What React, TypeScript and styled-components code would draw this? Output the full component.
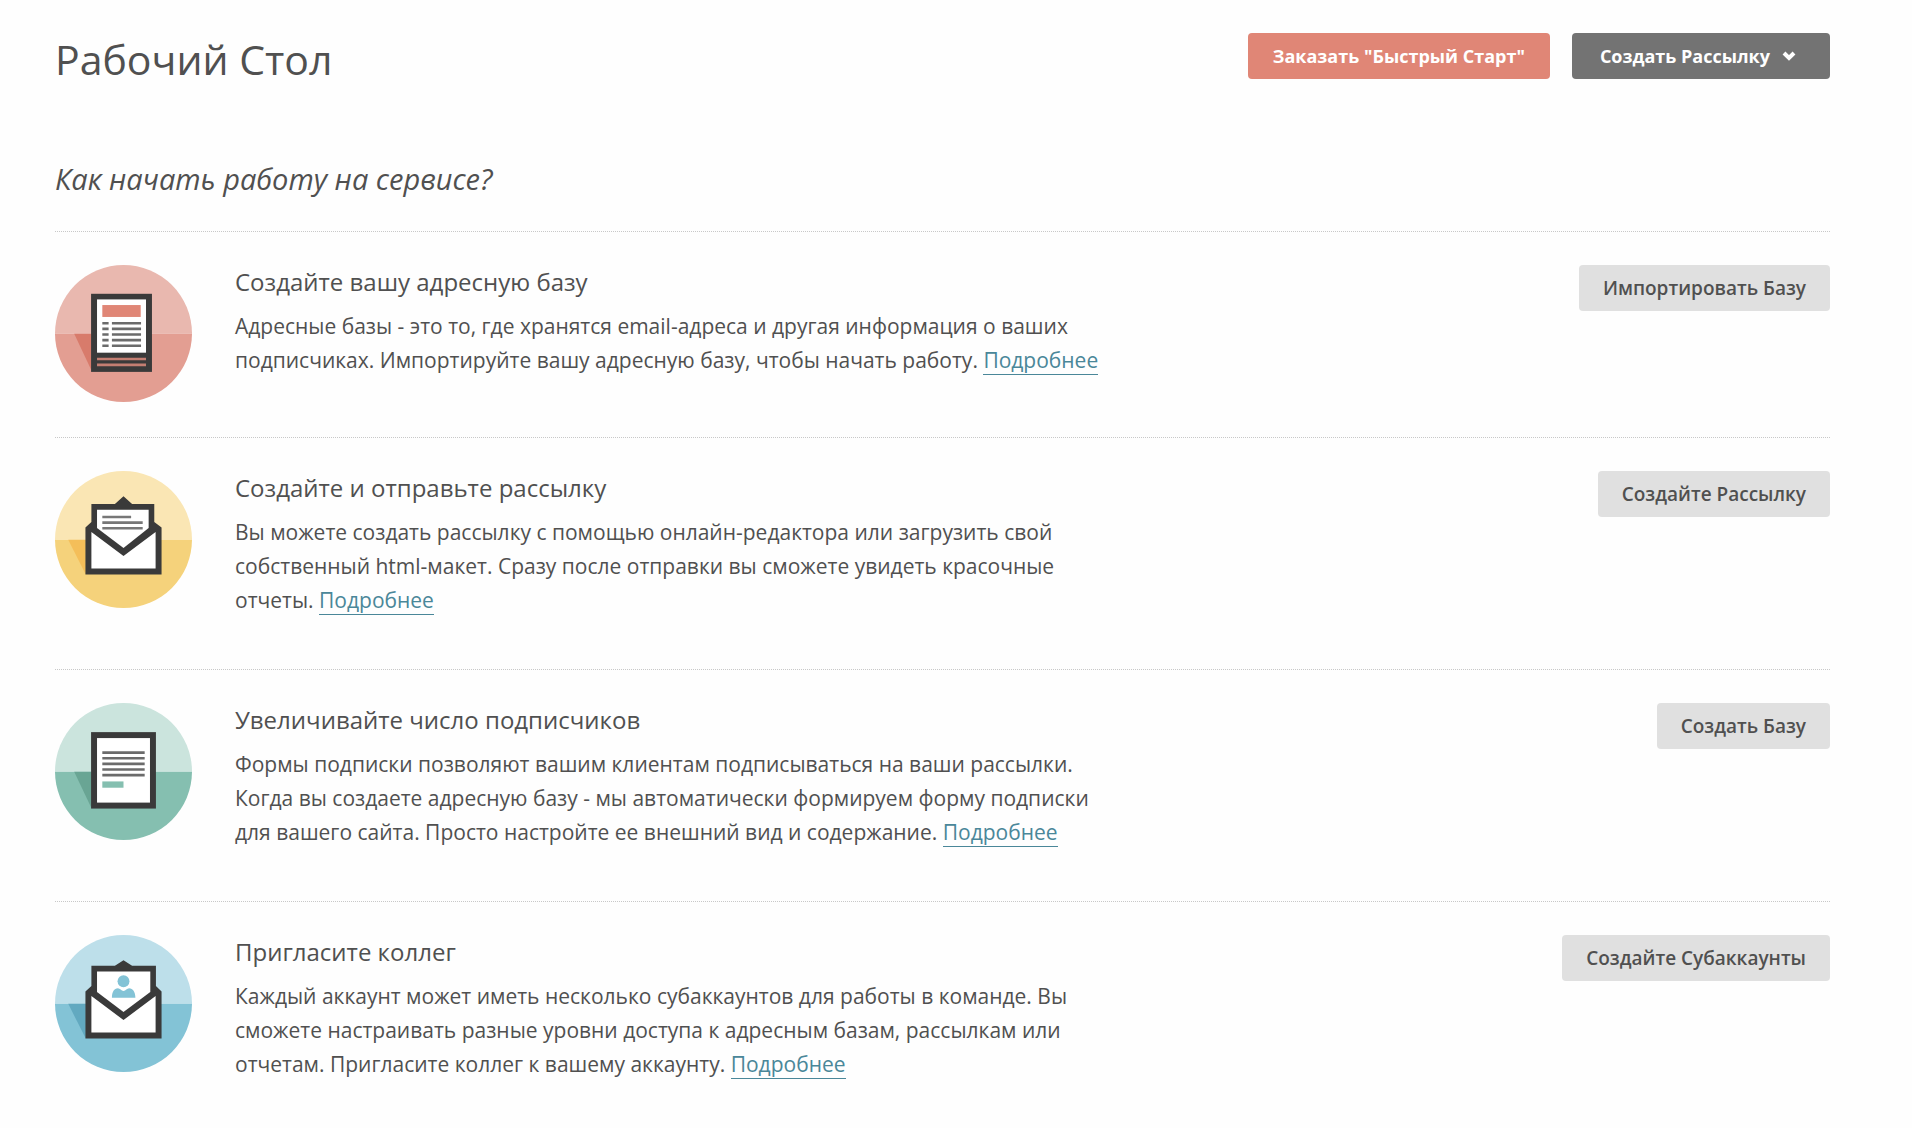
import React from 'react';
import styled, { createGlobalStyle } from 'styled-components';

const GlobalStyle = createGlobalStyle`
  *, *::before, *::after { box-sizing: border-box; }
  body {
    margin: 0;
    background: #fefefe;
    color: #505050;
    font-family: "Open Sans", "Noto Sans", sans-serif;
  }
`;

const Page = styled.main`
  padding: 33px 82px 33px 55px;
`;

const Header = styled.header`
  display: flex;
  justify-content: space-between;
  align-items: flex-start;
`;

const PageTitle = styled.h1`
  margin: 0;
  font-size: 41px;
  line-height: 52px;
  font-weight: 400;
`;

const HeaderActions = styled.div`
  display: flex;
  gap: 22px;
`;

const tones = {
  accent: { background: '#e08676', color: '#ffffff', padding: '0 25px', size: 18, weight: 700 },
  dark: { background: '#737373', color: '#ffffff', padding: '0 34px 0 28px', size: 18, weight: 700 },
  light: { background: '#e0e0e0', color: '#505050', padding: '0 24px', size: 19, weight: 600 },
};

const Button = styled.button<{ $tone: keyof typeof tones }>`
  display: inline-flex;
  align-items: center;
  gap: 12px;
  height: 46px;
  padding: ${(p) => tones[p.$tone].padding};
  border: 0;
  border-radius: 4px;
  background: ${(p) => tones[p.$tone].background};
  color: ${(p) => tones[p.$tone].color};
  font-family: inherit;
  font-size: ${(p) => tones[p.$tone].size}px;
  line-height: 24px;
  font-weight: ${(p) => tones[p.$tone].weight};
  white-space: nowrap;
  cursor: pointer;
`;

const SectionTitle = styled.h2`
  margin: 74px 0 32px;
  font-size: 29px;
  line-height: 40px;
  font-weight: 400;
  font-style: italic;
`;

const Steps = styled.ul`
  margin: 0;
  padding: 0;
  list-style: none;
`;

const Step = styled.li`
  display: flex;
  align-items: flex-start;
  padding: 33px 0 35px;
  border-top: 1px dotted #c8c8c8;
`;

const StepIcon = styled.svg`
  flex: none;
  width: 137px;
  height: 137px;
  margin-right: 43px;
`;

const StepBody = styled.div<{ $short?: boolean }>`
  flex: 0 1 886px;
  min-width: 0;
  margin-right: auto;
  padding-bottom: ${(p) => (p.$short ? 0 : 17)}px;
`;

const StepTitle = styled.h3`
  margin: 0 0 10px;
  font-size: 24px;
  line-height: 34px;
  font-weight: 400;
`;

const StepText = styled.p`
  margin: 0;
  font-size: 21px;
  line-height: 34px;
`;

const MoreLink = styled.a`
  color: #4a8799;
  text-decoration: none;
  border-bottom: 1px solid #4a8799;
`;

const INK = '#3a3a3a';

function Backdrop({ id, top, bottom, children }: { id: string; top: string; bottom: string; children: React.ReactNode }) {
  return (
    <StepIcon viewBox="30 30 414 414" aria-hidden="true">
      <clipPath id={id}>
        <circle cx="237" cy="237" r="207" />
      </clipPath>
      <g clipPath={`url(#${id})`}>
        <rect x="30" y="30" width="414" height="208" fill={top} />
        <rect x="30" y="238" width="414" height="206" fill={bottom} />
      </g>
      {children}
    </StepIcon>
  );
}

function ListIcon() {
  const rows = [206, 223, 240, 257, 274];
  return (
    <Backdrop id="list-clip" top="#e9b8af" bottom="#e39e92">
      <path d="M88 238H140V348Z" fill="#d87b6b" />
      <rect x="139" y="117" width="184" height="236" fill={INK} />
      <rect x="157" y="134" width="148" height="161" fill="#fff" />
      <rect x="173" y="151" width="116" height="36" fill="#e08676" />
      {rows.map((y) => (
        <path key={y} d={`M173 ${y}H192M202 ${y}H290`} stroke="#6b6b6b" strokeWidth="8" />
      ))}
      <path d="M157 314H305M157 332H305" stroke="#c47e72" strokeWidth="8" />
    </Backdrop>
  );
}

function Envelope({ children, side, top }: { children: React.ReactNode; side: number; top: number }) {
  return (
    <>
      <path
        d={`M237 106L263 ${top}H${side}V184L352 201V343H122V201L140 184V${top}H211Z`}
        fill={INK}
      />
      <path d={`M157 ${top + 17}H${side - 17}V202L237 263L157 202Z`} fill="#fff" />
      <path d="M140 214L237 287L334 214V325H140Z" fill="#fff" />
      {children}
    </>
  );
}

function LetterIcon() {
  return (
    <Backdrop id="letter-clip" top="#fae6b4" bottom="#f5d27b">
      <path d="M70 238H123V343Z" fill="#f4be59" />
      <Envelope side={330} top={130}>
        <path d="M173 169H260M173 186H295M173 203H295" stroke="#777" strokeWidth="8" />
      </Envelope>
    </Backdrop>
  );
}

function FormIcon() {
  const rows = [180, 197, 214, 231, 248];
  return (
    <Backdrop id="form-clip" top="#cbe4dd" bottom="#85bfb0">
      <path d="M88 238H140V347Z" fill="#69a594" />
      <rect x="139" y="118" width="196" height="231" fill={INK} />
      <rect x="157" y="136" width="160" height="195" fill="#fff" />
      {rows.map((y) => (
        <path key={y} d={`M173 ${y}H301`} stroke="#6b6b6b" strokeWidth="8" />
      ))}
      <rect x="173" y="267" width="64" height="19" fill="#85bfb0" />
    </Backdrop>
  );
}

function InviteIcon() {
  return (
    <Backdrop id="invite-clip" top="#bddfea" bottom="#83c3d6">
      <path d="M70 238H123V343Z" fill="#62a9c0" />
      <Envelope side={335} top={123}>
        <circle cx="237" cy="170" r="18" fill="#83c3d6" />
        <path d="M202 220C202 202 209 191 220 191C227 191 230 199 237 199C244 199 247 191 254 191C265 191 273 202 273 220Z" fill="#83c3d6" />
      </Envelope>
    </Backdrop>
  );
}

const steps = [
  {
    icon: <ListIcon />,
    title: 'Создайте вашу адресную базу',
    text: 'Адресные базы - это то, где хранятся email-адреса и другая информация о ваших подписчиках. Импортируйте вашу адресную базу, чтобы начать работу.',
    action: 'Импортировать Базу',
    short: true,
  },
  {
    icon: <LetterIcon />,
    title: 'Создайте и отправьте рассылку',
    text: 'Вы можете создать рассылку с помощью онлайн-редактора или загрузить свой собственный html-макет. Сразу после отправки вы сможете увидеть красочные отчеты.',
    action: 'Создайте Рассылку',
  },
  {
    icon: <FormIcon />,
    title: 'Увеличивайте число подписчиков',
    text: 'Формы подписки позволяют вашим клиентам подписываться на ваши рассылки. Когда вы создаете адресную базу - мы автоматически формируем форму подписки для вашего сайта. Просто настройте ее внешний вид и содержание.',
    action: 'Создать Базу',
  },
  {
    icon: <InviteIcon />,
    title: 'Пригласите коллег',
    text: 'Каждый аккаунт может иметь несколько субаккаунтов для работы в команде. Вы сможете настраивать разные уровни доступа к адресным базам, рассылкам или отчетам. Пригласите коллег к вашему аккаунту.',
    action: 'Создайте Субаккаунты',
  },
];

export default function App() {
  return (
    <>
      <GlobalStyle />
      <Page>
        <Header>
          <PageTitle>Рабочий Стол</PageTitle>
          <HeaderActions>
            <Button type="button" $tone="accent">Заказать "Быстрый Старт"</Button>
            <Button type="button" $tone="dark">
              Создать Рассылку
              <svg width="14" height="12" viewBox="0 0 14 12" aria-hidden="true">
                <path d="M2 3L7 8L12 3" fill="none" stroke="#fff" strokeWidth="4" />
              </svg>
            </Button>
          </HeaderActions>
        </Header>
        <SectionTitle>Как начать работу на сервисе?</SectionTitle>
        <Steps>
          {steps.map((step) => (
            <Step key={step.title}>
              {step.icon}
              <StepBody $short={step.short}>
                <StepTitle>{step.title}</StepTitle>
                <StepText>
                  {step.text} <MoreLink href="#">Подробнее</MoreLink>
                </StepText>
              </StepBody>
              <Button type="button" $tone="light">{step.action}</Button>
            </Step>
          ))}
        </Steps>
      </Page>
    </>
  );
}
